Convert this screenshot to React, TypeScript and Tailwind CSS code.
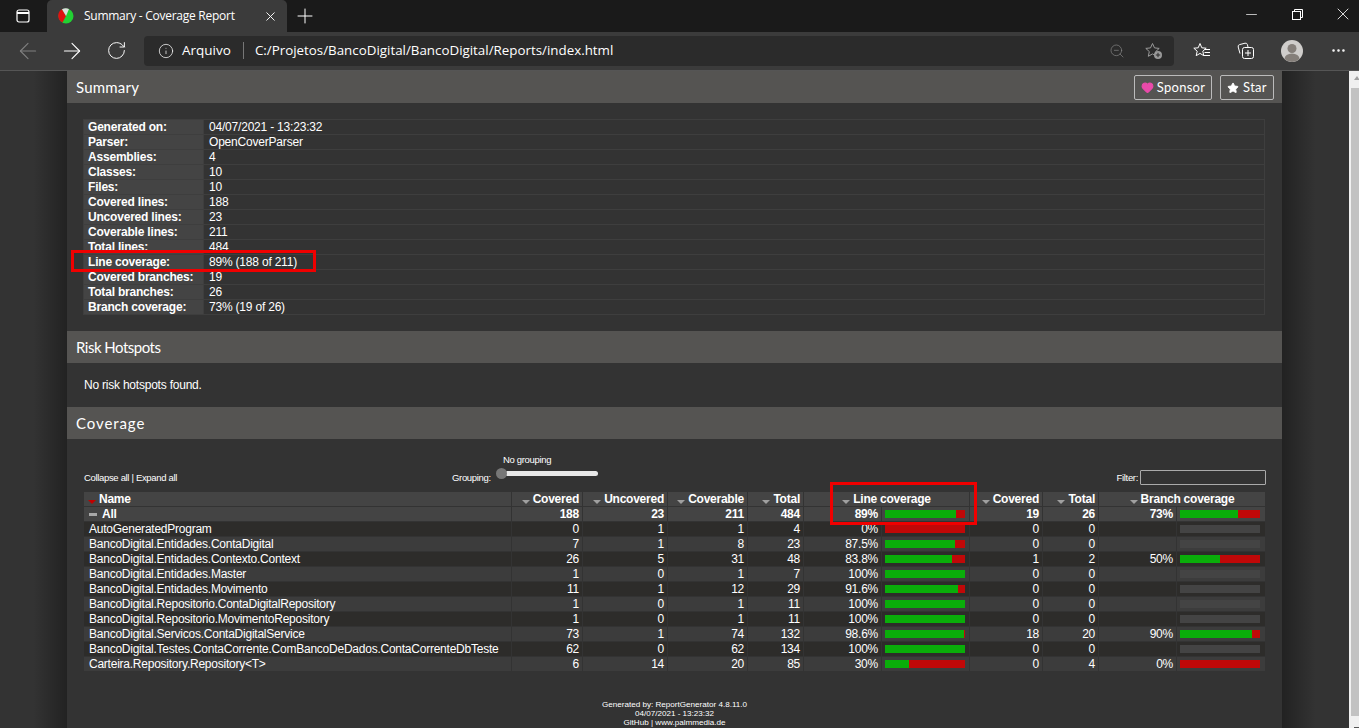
import * as React from 'react';
import { ArrowLeft, ArrowRight, RotateCw, Info, ZoomOut, X, Plus, Minus, Star, Heart, MoreHorizontal } from 'lucide-react';

const SUMMARY: [string, string][] = [
  ['Generated on:', '04/07/2021 - 13:23:32'],
  ['Parser:', 'OpenCoverParser'],
  ['Assemblies:', '4'],
  ['Classes:', '10'],
  ['Files:', '10'],
  ['Covered lines:', '188'],
  ['Uncovered lines:', '23'],
  ['Coverable lines:', '211'],
  ['Total lines:', '484'],
  ['Line coverage:', '89% (188 of 211)'],
  ['Covered branches:', '19'],
  ['Total branches:', '26'],
  ['Branch coverage:', '73% (19 of 26)'],
];

interface Row {
  name: string;
  covered: number;
  uncovered: number;
  coverable: number;
  total: number;
  line: string;
  linePct: number;
  bCovered: number;
  bTotal: number;
  branch: string;
  branchPct: number | null;
}

const ROWS: Row[] = [
  { name: 'AutoGeneratedProgram', covered: 0, uncovered: 1, coverable: 1, total: 4, line: '0%', linePct: 0, bCovered: 0, bTotal: 0, branch: '', branchPct: null },
  { name: 'BancoDigital.Entidades.ContaDigital', covered: 7, uncovered: 1, coverable: 8, total: 23, line: '87.5%', linePct: 87.5, bCovered: 0, bTotal: 0, branch: '', branchPct: null },
  { name: 'BancoDigital.Entidades.Contexto.Context', covered: 26, uncovered: 5, coverable: 31, total: 48, line: '83.8%', linePct: 83.8, bCovered: 1, bTotal: 2, branch: '50%', branchPct: 50 },
  { name: 'BancoDigital.Entidades.Master', covered: 1, uncovered: 0, coverable: 1, total: 7, line: '100%', linePct: 100, bCovered: 0, bTotal: 0, branch: '', branchPct: null },
  { name: 'BancoDigital.Entidades.Movimento', covered: 11, uncovered: 1, coverable: 12, total: 29, line: '91.6%', linePct: 91.6, bCovered: 0, bTotal: 0, branch: '', branchPct: null },
  { name: 'BancoDigital.Repositorio.ContaDigitalRepository', covered: 1, uncovered: 0, coverable: 1, total: 11, line: '100%', linePct: 100, bCovered: 0, bTotal: 0, branch: '', branchPct: null },
  { name: 'BancoDigital.Repositorio.MovimentoRepository', covered: 1, uncovered: 0, coverable: 1, total: 11, line: '100%', linePct: 100, bCovered: 0, bTotal: 0, branch: '', branchPct: null },
  { name: 'BancoDigital.Servicos.ContaDigitalService', covered: 73, uncovered: 1, coverable: 74, total: 132, line: '98.6%', linePct: 98.6, bCovered: 18, bTotal: 20, branch: '90%', branchPct: 90 },
  { name: 'BancoDigital.Testes.ContaCorrente.ComBancoDeDados.ContaCorrenteDbTeste', covered: 62, uncovered: 0, coverable: 62, total: 134, line: '100%', linePct: 100, bCovered: 0, bTotal: 0, branch: '', branchPct: null },
  { name: 'Carteira.Repository.Repository<T>', covered: 6, uncovered: 14, coverable: 20, total: 85, line: '30%', linePct: 30, bCovered: 0, bTotal: 4, branch: '0%', branchPct: 0 },
];

const Bar = ({ pct }: { pct: number | null }) => (
  <div className="flex h-[8px] w-[80px] bg-[#444444]">
    {pct !== null && (
      <>
        <div className="bg-[#0aad0a]" style={{ width: `${pct}%` }} />
        <div className="flex-1 bg-[#c00808]" />
      </>
    )}
  </div>
);

const SortArrow = ({ red }: { red?: boolean }) => (
  <svg width="8" height="4" viewBox="0 0 8 4" className="mr-[3px] inline-block align-[-1px]">
    <path d="M0 0h8L4 4z" fill={red ? '#c00000' : '#a0a0a0'} />
  </svg>
);

const SectionHeader = ({ title, spacing, children }: { title: string; spacing: string; children?: React.ReactNode }) => (
  <div className="flex h-[32px] items-center justify-between bg-[#555452] pl-[9px] pr-[8px] font-['Lato',sans-serif] text-[15px] text-white">
    <span className={spacing}>{title}</span>
    {children}
  </div>
);

const th = 'border border-[#333333] bg-[#444444] px-[3px] py-0 text-right font-bold';
const td = 'border border-[#333333] px-[3px] py-0 text-right';

export default function App() {
  return (
    <div className="flex h-[728px] flex-col overflow-hidden bg-[#333333] font-['Liberation_Sans',Arial,sans-serif] text-white">
      {/* tab strip */}
      <div className="flex h-[32px] shrink-0 items-center bg-[#1a1a1a] font-['Open_Sans',sans-serif]">
        <div className="flex w-[47px] justify-center pr-[1px]">
          <svg width="14" height="14" viewBox="0 0 14 14" fill="none" stroke="#fff" strokeWidth="1.2">
            <rect x="1" y="1" width="12" height="12" rx="2" />
            <path d="M1 4h12" strokeWidth="2" />
          </svg>
        </div>
        <div className="flex h-[32px] w-[240px] items-center rounded-t-[5px] bg-[#3b3b3b] pl-[11px] pr-[9px]">
          <svg width="16" height="16" viewBox="0 0 16 16">
            <circle cx="8" cy="8" r="7.5" fill="#22d133" />
            <path d="M8 8 4 1.3A7.5 7.5 0 0 0 4.5 14.6z" fill="#e01010" />
            <path d="M8 8 4 1.3A7.5 7.5 0 0 1 11 1z" fill="#dddddd" />
          </svg>
          <span className="ml-[10px] flex-1 truncate text-[12px] tracking-[-0.26px] text-white">Summary - Coverage Report</span>
          <X size={15} strokeWidth={1.5} className="text-white" />
        </div>
        <Plus size={24} strokeWidth={1} className="ml-[6px] text-white" />
        <div className="ml-auto mr-[1px] flex items-center gap-[16px] pb-[4px]">
          <div className="flex w-[30px] justify-center"><Minus size={17} strokeWidth={1} /></div>
          <div className="flex w-[30px] justify-center">
            <svg width="11" height="11" viewBox="0 0 11 11" fill="none" stroke="#fff">
              <rect x="0.5" y="2.5" width="8" height="8" />
              <path d="M2.5 2.5v-2h8v8h-2" />
            </svg>
          </div>
          <div className="flex w-[30px] justify-center"><X size={20} strokeWidth={1} /></div>
        </div>
      </div>

      {/* toolbar */}
      <div className="flex h-[39px] shrink-0 items-center border-b border-[#555555] bg-[#3b3b3b] pb-[1px] font-['Open_Sans',sans-serif]">
        <div className="flex w-[144px] items-center pl-[6px]">
          <div className="flex w-[44px] justify-center"><ArrowLeft size={26} strokeWidth={1} className="text-[#808080]" /></div>
          <div className="flex w-[44px] justify-center"><ArrowRight size={26} strokeWidth={1} /></div>
          <div className="flex w-[44px] justify-center"><RotateCw size={21} strokeWidth={1.1} /></div>
        </div>
        <div className="flex h-[30px] w-[1030px] items-center rounded-[4px] bg-[#2b2b2b] pl-[14px] pr-[11px] text-[13.5px]">
          <Info size={16} strokeWidth={1.1} />
          <span className="ml-[8px]">Arquivo</span>
          <span className="ml-[12px] h-[17px] w-px bg-[#777777]" />
          <span className="ml-[11px] flex-1 text-[13.35px]">C:/Projetos/BancoDigital/BancoDigital/Reports/index.html</span>
          <ZoomOut size={16} strokeWidth={1} className="text-[#8a8a8a]" />
          <svg width="18" height="18" viewBox="0 0 18 18" fill="none" className="ml-[20px]">
            <path d="M7.5 1.5l2 4.4 4.7.5-3.5 3.2 1 4.7-4.2-2.4-4.2 2.4 1-4.7L.8 6.4l4.7-.5z" stroke="#9a9a9a" />
            <circle cx="13" cy="13" r="4" fill="#9a9a9a" />
            <path d="M13 10.8v4.4M10.8 13h4.4" stroke="#2b2b2b" />
          </svg>
        </div>
        <svg width="18" height="18" viewBox="0 0 18 18" fill="none" stroke="#fff" className="ml-[19px]">
          <path d="M7 1.5l1.8 4.3 4.4.4-3.4 3 1 4.5L7 11.4 3.2 13.7l1-4.5-3.4-3 4.4-.4z" />
          <path d="M11.5 7.5H17M11.5 10.5H17M11 13.5H17" />
        </svg>
        <svg width="17" height="17" viewBox="0 0 17 17" fill="none" stroke="#fff" className="ml-[26px]">
          <path d="M3 11.5 1.2 5A2 2 0 0 1 2.6 2.6L8 1.2A2 2 0 0 1 10.4 2.6L11 5" />
          <rect x="5.5" y="5.5" width="11" height="11" rx="2" />
          <path d="M11 8v6M8 11h6" />
        </svg>
        <svg width="22" height="22" viewBox="0 0 22 22" className="ml-[27px]">
          <circle cx="11" cy="11" r="11" fill="#cfcdcb" />
          <circle cx="11" cy="8.5" r="4.5" fill="#857f7a" />
          <path d="M3.5 19a7.5 5.5 0 0 1 15 0 11 11 0 0 1-15 0z" fill="#857f7a" />
        </svg>
        <MoreHorizontal size={17} strokeWidth={1.6} className="ml-[27px]" />
      </div>

      {/* page */}
      <div className="flex min-h-0 flex-1">
        <div className="flex flex-1 bg-[#333333]">
          <div className="w-[67px] shrink-0 bg-gradient-to-r from-[#333333] from-50% to-[#222222]" />
          <main className="relative w-[1215px] shrink-0 bg-[#333333]">
            <SectionHeader title="Summary" spacing="tracking-[0.2px]">
              <div className="mt-[1px] flex gap-[8px] text-[13px] tracking-[0.3px]">
                <span className="flex h-[25px] w-[78px] items-center justify-center gap-[3px] rounded-[2px] border border-[#bbbbbb]">
                  <Heart size={13} fill="#ea4aaa" stroke="#ea4aaa" />
                  Sponsor
                </span>
                <span className="flex h-[25px] w-[54px] items-center justify-center gap-[4px] rounded-[2px] border border-[#bbbbbb]">
                  <Star size={12} fill="#ffffff" stroke="#ffffff" />
                  Star
                </span>
              </div>
            </SectionHeader>

            <div className="px-[16px] pb-[16px] pt-[16px]">
              <table className="w-[1182px] table-fixed border-collapse text-[12px] leading-[14px] tracking-[-0.2px]">
                <colgroup>
                  <col className="w-[120px]" />
                  <col />
                </colgroup>
                <tbody>
                  {SUMMARY.map(([k, v]) => (
                    <tr key={k} className="h-[15px]">
                      <th className="border border-[#3e3e3e] bg-[#444444] px-[4px] py-0 text-left font-bold">{k}</th>
                      <td className="border border-[#3e3e3e] px-[5px] py-0">{v}</td>
                    </tr>
                  ))}
                </tbody>
              </table>
            </div>

            <SectionHeader title="Risk Hotspots" spacing="tracking-[-0.5px]" />
            <div className="h-[44px] px-[17px] pt-[15px] text-[12px] leading-[14px] tracking-[-0.22px]">No risk hotspots found.</div>

            <SectionHeader title="Coverage" spacing="tracking-[0.9px]" />
            <div className="px-[17px]">
              <div className="flex h-[52px] items-end pb-[7px] text-[9.5px] leading-[12px] tracking-[-0.33px]">
                <span className="w-[368px]">Collapse all | Expand all</span>
                <span className="w-[44px]">Grouping:</span>
                <div className="relative h-[46px] w-[102px]">
                  <span className="absolute left-[7px] top-[16px] whitespace-nowrap">No grouping</span>
                  <div className="absolute left-[9px] top-[33px] h-[5px] w-[93px] rounded-full bg-[#e8e8e8]" />
                  <div className="absolute left-0 top-[30px] h-[11px] w-[11px] rounded-full bg-[#777777]" />
                </div>
                <span className="ml-auto mr-[2px]">Filter:</span>
                <input className="mb-[-1px] mr-[-1px] h-[15px] w-[126px] rounded-[1px] border border-[#aaaaaa] bg-transparent" />
              </div>

              <table className="ml-[-1px] w-[1182px] table-fixed border-collapse text-[12px] leading-[14px] tracking-[-0.24px]">
                <colgroup>
                  <col className="w-[428px]" />
                  <col className="w-[71px]" />
                  <col className="w-[85px]" />
                  <col className="w-[80px]" />
                  <col className="w-[56px]" />
                  <col className="w-[78px]" />
                  <col className="w-[88px]" />
                  <col className="w-[73px]" />
                  <col className="w-[56px]" />
                  <col className="w-[78px]" />
                  <col className="w-[89px]" />
                </colgroup>
                <thead>
                  <tr className="h-[15px]">
                    <th className={`${th} !text-left !pl-[4px]`}><SortArrow red />Name</th>
                    <th className={th}><SortArrow />Covered</th>
                    <th className={th}><SortArrow />Uncovered</th>
                    <th className={th}><SortArrow />Coverable</th>
                    <th className={th}><SortArrow />Total</th>
                    <th className={`${th} !text-center`} colSpan={2}><SortArrow />Line coverage</th>
                    <th className={th}><SortArrow />Covered</th>
                    <th className={th}><SortArrow />Total</th>
                    <th className={`${th} !text-center`} colSpan={2}><SortArrow />Branch coverage</th>
                  </tr>
                </thead>
                <tbody>
                  <tr className="h-[15px] bg-[#444444] font-bold">
                    <td className={`${td} !text-left !pl-[5px]`}>
                      <span className="mr-[5px] inline-block h-[3px] w-[8px] bg-[#a8a8a8] align-[2px]" />All
                    </td>
                    <td className={td}>188</td>
                    <td className={td}>23</td>
                    <td className={td}>211</td>
                    <td className={td}>484</td>
                    <td className={td}>89%</td>
                    <td className={td}><Bar pct={89} /></td>
                    <td className={td}>19</td>
                    <td className={td}>26</td>
                    <td className={td}>73%</td>
                    <td className={td}><Bar pct={73} /></td>
                  </tr>
                  {ROWS.map((r, i) => (
                    <tr key={r.name} className={`h-[15px] ${i % 2 === 0 ? 'bg-[#2d2c2a]' : 'bg-[#3c3c3c]'}`}>
                      <td className={`${td} !text-left !pl-[5px] whitespace-nowrap`}>{r.name}</td>
                      <td className={td}>{r.covered}</td>
                      <td className={td}>{r.uncovered}</td>
                      <td className={td}>{r.coverable}</td>
                      <td className={td}>{r.total}</td>
                      <td className={td}>{r.line}</td>
                      <td className={td}><Bar pct={r.linePct} /></td>
                      <td className={td}>{r.bCovered}</td>
                      <td className={td}>{r.bTotal}</td>
                      <td className={td}>{r.branch}</td>
                      <td className={td}><Bar pct={r.branchPct} /></td>
                    </tr>
                  ))}
                </tbody>
              </table>

              <div className="pt-[28px] text-center text-[8.1px] leading-[9px]">
                <div>Generated by: ReportGenerator 4.8.11.0</div>
                <div>04/07/2021 - 13:23:32</div>
                <div>GitHub | www.palmmedia.de</div>
              </div>
            </div>

            {/* red annotation boxes */}
            <div className="absolute left-[4px] top-[179px] h-[22px] w-[245px] border-[3px] border-[#f00000]" />
            <div className="absolute left-[763px] top-[411px] h-[43px] w-[147px] border-[3px] border-[#f00000]" />
          </main>
          <div className="flex-1 bg-gradient-to-r from-[#222222] to-[#333333] to-50%" />
        </div>

        {/* scrollbar */}
        <div className="flex w-[10px] shrink-0 flex-col items-end bg-[#f0f0f0]">
          <svg width="5" height="4" viewBox="0 0 5 4" className="mt-[5px]"><path d="M0 4 3 0l2 3v1z" fill="#a0a0a0" /></svg>
          <div className="mt-[8px] h-[628px] w-[8px] bg-[#c2c2c2]" />
          <div className="mt-[11px] h-[1px] w-[5px] bg-[#555555]" />
        </div>
      </div>
    </div>
  );
}
